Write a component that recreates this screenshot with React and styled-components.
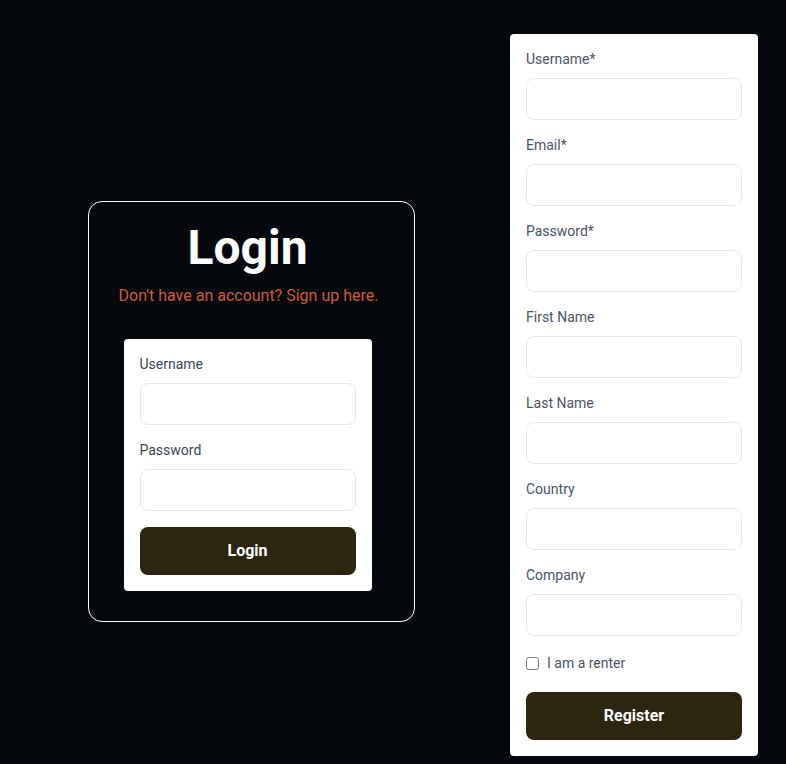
import React, { useState } from 'react';
import styled, { createGlobalStyle } from 'styled-components';

const GlobalStyle = createGlobalStyle`
  html, body {
    margin: 0;
    padding: 0;
    background: #05090d;
    font-family: Roboto, "Liberation Sans", sans-serif;
  }
  * {
    box-sizing: border-box;
  }
`;

const Page = styled.div`
  display: flex;
  align-items: flex-start;
  gap: 95px;
  padding: 34px 0 8px 88px;
  min-height: 764px;
`;

const LoginCard = styled.div`
  width: 327px;
  margin-top: 167px;
  border: 1px solid #ffffff;
  border-radius: 14px;
  padding: 17px 37px 30px 29px;
  display: flex;
  flex-direction: column;
  align-items: center;
  text-align: center;
`;

const Title = styled.h1`
  margin: 0;
  font-size: 48px;
  font-weight: 700;
  color: #ffffff;
`;

const Subtitle = styled.a`
  display: block;
  margin: 10px 0 0 2px;
  font-size: 16px;
  color: #d2592b;
  text-decoration: none;
  white-space: nowrap;
  cursor: pointer;
`;

const FormBox = styled.form`
  width: 248px;
  background: #ffffff;
  border-radius: 4px;
  padding: 16px;
  display: flex;
  flex-direction: column;
  text-align: left;
  margin-top: ${(p) => p.$offset || 0}px;
`;

const Field = styled.div`
  display: flex;
  flex-direction: column;
  margin-bottom: 16px;
`;

const Label = styled.label`
  font-size: 14px;
  line-height: 18px;
  color: ${(p) => (p.$muted ? '#4b5563' : '#3b4656')};
  margin-bottom: 10px;
`;

const Input = styled.input`
  width: 100%;
  height: 42px;
  border: 1px solid #e5e7eb;
  border-radius: 8px;
  padding: 0 12px;
  font-family: inherit;
  font-size: 14px;
  outline: none;
  background: #ffffff;
`;

const CheckRow = styled.label`
  display: flex;
  align-items: center;
  gap: 8px;
  margin: 1px 0 19px;
  height: 20px;
  font-size: 14px;
  line-height: 20px;
  color: #4b5563;
  cursor: pointer;
`;

const CheckBox = styled.input`
  width: 13px;
  height: 13px;
  margin: 0;
`;

const SubmitButton = styled.button`
  width: 100%;
  height: 48px;
  border: none;
  border-radius: 8px;
  padding: 0 0 2px;
  background: #2c250f;
  color: #ffffff;
  font-family: inherit;
  font-size: 16px;
  font-weight: 700;
  cursor: pointer;

  &:hover {
    opacity: 0.9;
  }
`;

const registerFields = [
  'Username*',
  'Email*',
  'Password*',
  'First Name',
  'Last Name',
  'Country',
  'Company',
];

const App = () => {
  const [renter, setRenter] = useState(false);

  return (
    <>
      <GlobalStyle />
      <Page>
        <LoginCard>
          <Title>Login</Title>
          <Subtitle>Don't have an account? Sign up here.</Subtitle>
          <FormBox $offset={34} onSubmit={(e) => e.preventDefault()}>
            <Field>
              <Label>Username</Label>
              <Input type="text" />
            </Field>
            <Field>
              <Label>Password</Label>
              <Input type="password" />
            </Field>
            <SubmitButton type="submit">Login</SubmitButton>
          </FormBox>
        </LoginCard>

        <FormBox onSubmit={(e) => e.preventDefault()}>
          {registerFields.map((name) => (
            <Field key={name}>
              <Label $muted>{name}</Label>
              <Input type={name.startsWith('Password') ? 'password' : 'text'} />
            </Field>
          ))}
          <CheckRow>
            <CheckBox type="checkbox" checked={renter} onChange={(e) => setRenter(e.target.checked)} />
            I am a renter
          </CheckRow>
          <SubmitButton type="submit">Register</SubmitButton>
        </FormBox>
      </Page>
    </>
  );
};

export default App;
